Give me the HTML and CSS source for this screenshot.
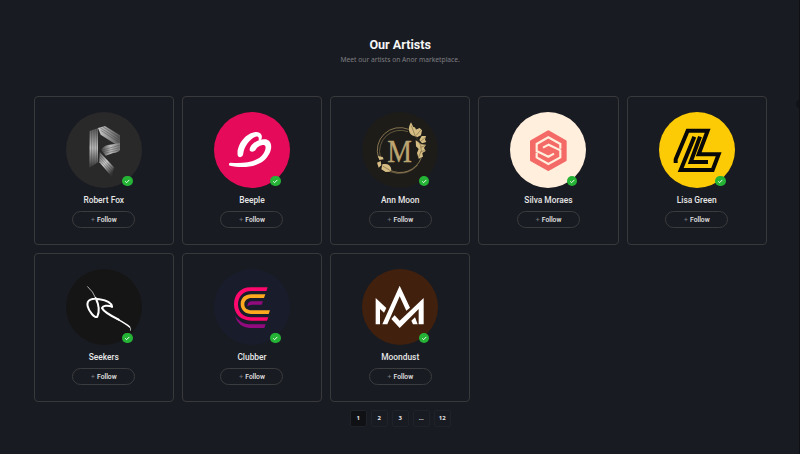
FILE: index.html
```html
<!DOCTYPE html>
<html lang="en">
<head>
<meta charset="utf-8">
<title>Our Artists</title>
<link rel="stylesheet" href="styles.css">
</head>
<body>
<svg width="0" height="0" class="defs">
  <defs>
    <linearGradient id="stem" x1="0" y1="0" x2="0" y2="1"><stop offset="0" stop-color="#555"/><stop offset=".5" stop-color="#bbb"/><stop offset="1" stop-color="#333"/></linearGradient>
    <linearGradient id="band" x1="0" y1="0" x2="1" y2="0"><stop offset="0" stop-color="#ccc"/><stop offset="1" stop-color="#555"/></linearGradient>
    <linearGradient id="bandBack" x1="0" y1="0" x2="1" y2="0"><stop offset="0" stop-color="#444"/><stop offset=".5" stop-color="#bbb"/><stop offset="1" stop-color="#777"/></linearGradient>
    <linearGradient id="leg" x1="0" y1="0" x2=".6" y2="1"><stop offset="0" stop-color="#555"/><stop offset=".5" stop-color="#ccc"/><stop offset="1" stop-color="#333"/></linearGradient>
    <symbol id="check" viewBox="0 0 11 11"><path d="M3.4 5.6 4.8 7 7.7 4.1" fill="none" stroke="#fff" stroke-width="1"/></symbol>
  </defs>
</svg>
<main class="page">
  <header class="heading">
    <h1>Our Artists</h1>
    <p>Meet our artists on Anor marketplace.</p>
  </header>
  <section class="grid">
    <article class="card">
      <div class="avatar charcoal">
        <svg class="logo" viewBox="112 67 228 228">
          <path d="M183 124 208 115V218L182 235Z" fill="url(#stem)"/>
          <path d="M208 115 229 109 274 137V163L264 166 216 135Z" fill="url(#band)"/>
          <path d="M218 181Q222 170 238 166L274 160V181Q268 189 254 190L231 198Z" fill="url(#bandBack)"/>
          <path d="M213 187 256 233 250 262 212 218Z" fill="url(#leg)"/>
          <path d="M189 122V232M196 119V228M203 116V223M214 114 271 151M216 122 270 157M222 111 273 144M221 181 273 167M223 186 273 174M227 191 270 181M213 195 254 240M213 203 253 248M213 211 251 255" fill="none" stroke="#292929" stroke-width="1"/>
        </svg>
        <span class="badge"><svg><use href="#check"/></svg></span>
      </div>
      <h2>Robert Fox</h2>
      <button><i>+</i>Follow</button>
    </article>
    <article class="card">
      <div class="avatar pink">
        <svg class="logo" viewBox="108 67 228 228">
          <path d="M179 197C175 165 205 127 236 127C249 128 255 137 250 149C247 155 241 153 242 147C243 142 239 139 233 141C214 147 197 174 196 191C195 204 182 206 179 197Z" fill="#fff"/>
          <path d="M215 182C214 165 240 147 262 149C282 152 284 175 273 194C253 233 198 237 155 228C151 225 153 219 157 219C197 223 238 217 255 194C264 181 266 166 257 166C246 166 237 173 234 179C230 188 217 188 215 182Z" fill="#fff"/>
        </svg>
        <span class="badge"><svg><use href="#check"/></svg></span>
      </div>
      <h2>Beeple</h2>
      <button><i>+</i>Follow</button>
    </article>
    <article class="card">
      <div class="avatar onyx">
        <svg class="logo" viewBox="108 67 228 228">
          <g fill="none" stroke="#a18c5c" stroke-width="2.4"><path d="M248 119A68 68 0 0 0 158 205M189 240A68 68 0 0 0 286 204"/><path d="M246 126A63 63 0 0 0 163 202M192 246A73 73 0 0 0 275 226" stroke-width="1.6"/></g>
          <text x="221" y="218" class="monogram" textLength="74" lengthAdjust="spacingAndGlyphs">M</text>
          <g fill="#d5bd83">
            <path d="M255 98C247 111 245 127 258 137L270 141C273 128 270 109 262 112Z"/>
            <path d="M265 122 281 115 288 122 285 137 273 143 264 134Z"/>
            <path d="M287 139 300 139 297 150 301 157 288 161 280 151Z"/>
            <path d="M269 152 278 158 286 164 300 165 294 175 299 184 289 190 291 201 278 207 273 190 278 178 270 170Z"/>
            <path d="M156 199 170 202 173 209 160 211ZM153 219 164 214 166 227 158 234ZM169 224C182 220 194 225 196 239L192 246 179 247 166 239Z"/>
          </g>
          <path d="M256 108 267 137 284 167 286 183 277 204M271 137 284 121M284 155 299 143M170 229 192 242M284 173 297 168M284 187 296 182" fill="none" stroke="#5b4c2d" stroke-width="1.5"/>
        </svg>
        <span class="badge"><svg><use href="#check"/></svg></span>
      </div>
      <h2>Ann Moon</h2>
      <button><i>+</i>Follow</button>
    </article>
    <article class="card">
      <div class="avatar cream">
        <svg class="logo" viewBox="108 67 228 228">
          <path d="M223 126 274 155V211L223 240 172 211V155Z" fill="#f46a67" stroke="#f46a67" stroke-width="8" stroke-linejoin="round"/>
          <path d="M259 177V163L223 143 188 163V184L223 201 240 192M188 189V203L223 223 259 203V182L224 165 207 174" fill="none" stroke="#ffefdc" stroke-width="6.5"/>
        </svg>
        <span class="badge"><svg><use href="#check"/></svg></span>
      </div>
      <h2>Silva Moraes</h2>
      <button><i>+</i>Follow</button>
    </article>
    <article class="card">
      <div class="avatar yellow">
        <svg class="logo" viewBox="110 67 228 228">
          <path d="M160 220V209L196 123H256L229 194H289L271 241H175L216 141M233 141 205 217H257" fill="none" stroke="#080808" stroke-width="12"/>
        </svg>
        <span class="badge"><svg><use href="#check"/></svg></span>
      </div>
      <h2>Lisa Green</h2>
      <button><i>+</i>Follow</button>
    </article>
    <article class="card">
      <div class="avatar ink">
        <svg class="logo" viewBox="112 64 228 228">
          <g fill="none" stroke="#fff" stroke-linecap="round" stroke-linejoin="round"><path d="M177 117Q194 132 201 151" stroke-width="2"/><path d="M201 151C211 172 212 194 206 207C198 214 180 189 177 176C172 154 193 151 213 155C233 158 248 165 250 177" stroke-width="6"/><path d="M250 177C236 172 223 174 220 181C225 193 246 204 270 216" stroke-width="6"/><path d="M264 213Q294 230 303 238" stroke-width="4"/><path d="M300 235Q309 241 306 248" stroke-width="2"/></g>
        </svg>
        <span class="badge"><svg><use href="#check"/></svg></span>
      </div>
      <h2>Seekers</h2>
      <button><i>+</i>Follow</button>
    </article>
    <article class="card">
      <div class="avatar navy">
        <svg class="logo" viewBox="108 64 228 228">
          <path d="M171 205Q187 227 211 230H263L259 241H214Q181 238 171 205ZM208 176Q209 161 222 161H255L251 171H222Q213 171 208 176Z" fill="#910b7e"/>
          <path d="M269 119H218C186 119 168 142 168 170S188 219 219 219H267L271 209H220C194 209 180 192 180 170S195 130 219 130H265Z" fill="#ff086d"/>
          <path d="M262 140H220C201 140 188 151 188 169S202 199 220 199H272L276 188H221C207 188 199 181 199 170S208 151 221 151H258Z" fill="#fca920"/>
        </svg>
        <span class="badge"><svg><use href="#check"/></svg></span>
      </div>
      <h2>Clubber</h2>
      <button><i>+</i>Follow</button>
    </article>
    <article class="card">
      <div class="avatar brown">
        <svg class="logo" viewBox="108 64 228 228">
          <path d="M149 151 181 181 174 195 162 184V230H149ZM169 230 221 114 252 180 241 189 221 146 184 230ZM196 214 206 203 221 219 293 151V230H278V184L221 241ZM256 219 267 209 275 230H261Z" fill="#fff"/>
        </svg>
        <span class="badge"><svg><use href="#check"/></svg></span>
      </div>
      <h2>Moondust</h2>
      <button><i>+</i>Follow</button>
    </article>
  </section>
  <nav class="pages"><a class="current">1</a><a>2</a><a>3</a><a>...</a><a>12</a></nav>
  <span class="edge-tab"></span>
</main>
</body>
</html>
```
FILE: styles.css
```css
* { box-sizing: border-box; }
body {
  margin: 0;
  background: #191b22;
  color: #e7e7e7;
  font-family: Roboto, "Liberation Sans", sans-serif;
}
.defs { position: absolute; }
.page {
  position: relative;
  height: 454px;
  padding: 35.5px 32.2px 0 33.6px;
  border-right: 1px solid #0e1015;
  overflow: hidden;
}
.heading { height: 60px; text-align: center; }
.heading h1 { margin: 0; font-size: 12.6px; line-height: 17px; font-weight: 700; color: #f5f5f5; }
.heading p {
  margin: 1.5px 0 0;
  font: 6.7px/12px "Noto Sans", sans-serif;
  color: #7d7e81;
}
.grid {
  display: grid;
  grid-template-columns: repeat(5, 1fr);
  grid-auto-rows: 149px;
  gap: 8px;
}
.card {
  display: flex;
  flex-direction: column;
  align-items: center;
  padding-top: 15.5px;
  border: 1px solid #38393b;
  border-radius: 4px;
}
.avatar { position: relative; width: 76px; height: 76px; border-radius: 50%; }
.logo { display: block; width: 76px; height: 76px; }
.charcoal { background: #292929; }
.pink { background: #e60b5a; }
.onyx { background: #1d1c19; }
.cream { background: #ffefdc; }
.yellow { background: #fdcb05; }
.ink { background: #151515; }
.navy { background: #191c2b; }
.brown { background: #41210d; }
.badge {
  position: absolute;
  right: 9px;
  bottom: 2px;
  width: 10.5px;
  height: 10.5px;
  border-radius: 50%;
  background: #25b336;
}
.badge svg { display: block; width: 100%; height: 100%; }
.monogram { font: 94px "Liberation Serif", serif; fill: #bba570; stroke: #bba570; stroke-width: 1px; text-anchor: middle; }
.card h2 { margin: 6px 0 0; font-size: 8.4px; line-height: 12px; font-weight: 500; }
.card button {
  width: 63px;
  height: 17px;
  margin-top: 5px;
  padding: 1px 0 0;
  border: 1px solid #3b3c3e;
  border-radius: 9px;
  background: none;
  color: #e8e8e8;
  font: 500 6.7px/14px Roboto, sans-serif;
}
.card i { margin-right: 2px; font-size: 7.5px; line-height: 1; font-style: normal; font-weight: 400; color: #77787d; }
.pages { display: flex; justify-content: center; gap: 4px; margin-top: 8.5px; }
.pages a {
  width: 17px;
  height: 17px;
  border: 1px solid #20222a;
  border-radius: 2px;
  text-align: center;
  font: 700 6px/15px "Noto Sans", sans-serif;
}
.pages .current { background: #101115; }
.edge-tab {
  position: absolute;
  top: 99px;
  right: -7px;
  width: 10px;
  height: 10px;
  border-radius: 50%;
  background: #111318;
}
```
